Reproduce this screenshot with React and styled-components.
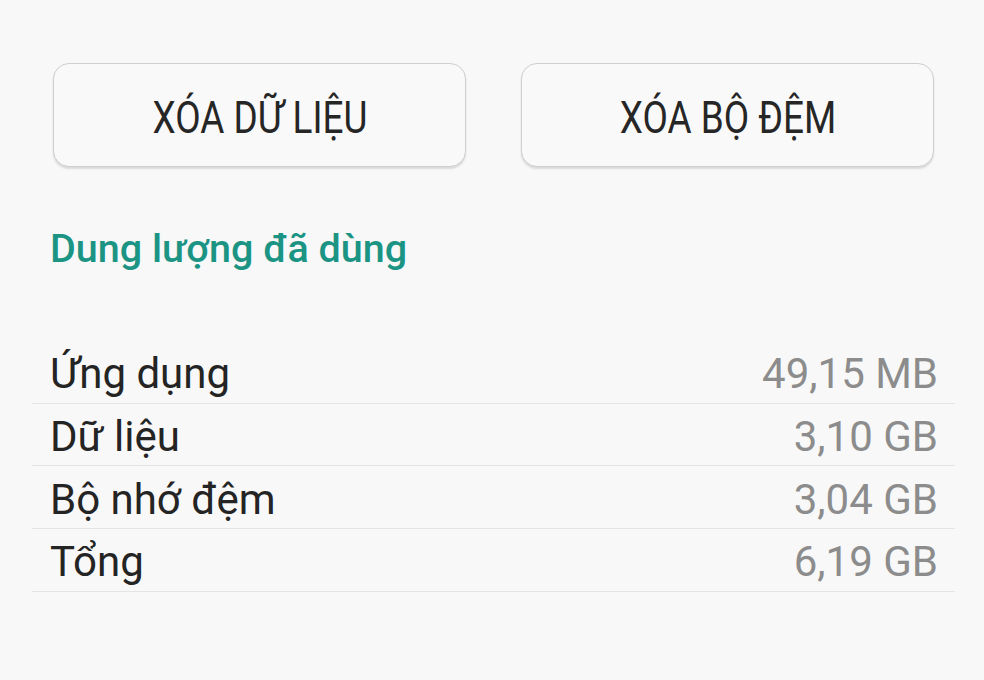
import React from "react";
import styled, { createGlobalStyle } from "styled-components";

const Global = createGlobalStyle`
  html, body { margin: 0; padding: 0; background: #f8f8f8; }
  body { font-family: Roboto, "Noto Sans", sans-serif; }
`;

const Page = styled.div`
  width: 984px;
  height: 680px;
  background: #f8f8f8;
  box-sizing: border-box;
  padding: 63px 29px 0 32px;
`;

const ButtonRow = styled.div`
  display: flex;
  gap: 55px;
  padding: 0 21px;
`;

const Button = styled.button`
  flex: 1;
  height: 104px;
  border: 1.5px solid #cfcfcf;
  border-radius: 16px;
  background: #f9f9f9;
  box-shadow: 0 2px 2px rgba(0, 0, 0, 0.12);
  display: flex;
  align-items: center;
  justify-content: center;
  padding: 0;
  font-family: Roboto, "Noto Sans", sans-serif;
  font-size: 45px;
  color: #262626;
`;

const Condensed = styled.span`
  display: inline-block;
  transform: scaleX(0.82);
  margin-top: 4px;
`;

const Heading = styled.h2`
  margin: 62px 0 0 18px;
  font-size: 39.5px;
  font-weight: 500;
  color: #1b9484;
  line-height: 40px;
`;

const List = styled.div`
  margin-top: 72px;
`;

const Row = styled.div`
  display: flex;
  justify-content: space-between;
  align-items: center;
  box-sizing: border-box;
  height: 62.7px;
  padding: 4px 17px 0 18px;
  border-bottom: 1.5px solid #e4e4e4;
`;

const Label = styled.span`
  font-size: 42px;
  color: #242424;
`;

const Value = styled.span`
  font-size: 42px;
  color: #8c8c8c;
`;

const rows = [
  ["Ứng dụng", "49,15 MB"],
  ["Dữ liệu", "3,10 GB"],
  ["Bộ nhớ đệm", "3,04 GB"],
  ["Tổng", "6,19 GB"],
];

export default function App() {
  return (
    <>
      <Global />
      <Page>
        <ButtonRow>
          <Button><Condensed>XÓA DỮ LIỆU</Condensed></Button>
          <Button><Condensed>XÓA BỘ ĐỆM</Condensed></Button>
        </ButtonRow>
        <Heading>Dung lượng đã dùng</Heading>
        <List>
          {rows.map(([l, v]) => (
            <Row key={l}>
              <Label>{l}</Label>
              <Value>{v}</Value>
            </Row>
          ))}
        </List>
      </Page>
    </>
  );
}
